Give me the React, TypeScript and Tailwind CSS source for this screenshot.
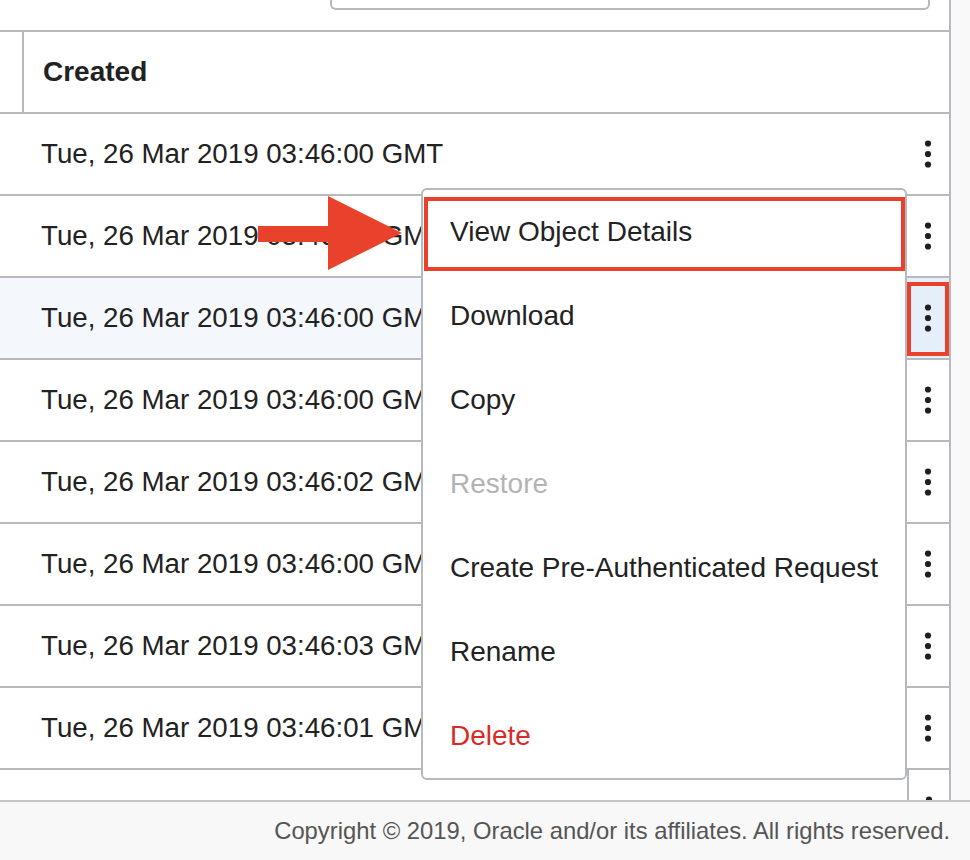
const dates = [
  'Tue, 26 Mar 2019 03:46:00 GMT',
  'Tue, 26 Mar 2019 03:46:01 GMT',
  'Tue, 26 Mar 2019 03:46:00 GMT',
  'Tue, 26 Mar 2019 03:46:00 GMT',
  'Tue, 26 Mar 2019 03:46:02 GMT',
  'Tue, 26 Mar 2019 03:46:00 GMT',
  'Tue, 26 Mar 2019 03:46:03 GMT',
  'Tue, 26 Mar 2019 03:46:01 GMT',
  'Tue, 26 Mar 2019 03:46:00 GMT',
]

const menuItems = [
  { label: 'View Object Details', tone: 'text-[#222]', boxed: true },
  { label: 'Download', tone: 'text-[#222]' },
  { label: 'Copy', tone: 'text-[#222]' },
  { label: 'Restore', tone: 'text-[#b3b3b3]' },
  { label: 'Create Pre-Authenticated Request', tone: 'text-[#222]' },
  { label: 'Rename', tone: 'text-[#222]' },
  { label: 'Delete', tone: 'text-[#d72b26]' },
]

function Kebab() {
  return (
    <svg width="8" height="28" viewBox="0 0 8 28" className="block">
      <circle cx="4" cy="3.5" r="3.1" fill="#1f1f1f" />
      <circle cx="4" cy="14" r="3.1" fill="#1f1f1f" />
      <circle cx="4" cy="24.5" r="3.1" fill="#1f1f1f" />
    </svg>
  )
}

export default function App() {
  return (
    <div className="relative w-[970px] h-[860px] overflow-hidden bg-white font-['Liberation_Sans',Arial,sans-serif] text-[#222]">
      <div className="flex h-[800px] overflow-hidden">
        <div className="w-[951px] shrink-0 border-r-2 border-[#b6b9bd]">
          {/* search box bottom edge */}
          <div className="h-[30px]">
            <div className="ml-[330px] w-[600px] h-[10px] border-x-2 border-b-2 border-[#b6b9bd] rounded-b-[6px]" />
          </div>

          {/* header */}
          <div className="flex h-[84px] border-y-2 border-[#b6b9bd]">
            <div className="w-[24px] border-r-2 border-[#b6b9bd]" />
            <div className="flex items-center pl-[19px] text-[28px] font-bold text-[#222]">Created</div>
          </div>

          {dates.map((d, i) => {
            const active = i === 2
            return (
              <div
                key={i}
                className={`flex h-[82px] shrink-0 border-b-2 border-[#b6b9bd] ${active ? 'bg-[#f4f7fc]' : ''}`}
              >
                <div className="flex-1 flex items-center pl-[41px] text-[27.7px] whitespace-nowrap overflow-hidden">
                  {d}
                </div>
                <div
                  className={`relative w-[42px] flex items-center justify-center ${active ? 'bg-[#e5eff9]' : ''} ${i === 8 ? 'border-l-2 border-[#b6b9bd]' : ''}`}
                >
                  <Kebab />
                  {active && (
                    <div className="absolute left-0 right-0 top-[4px] bottom-[2px] border-4 border-[#e8412c]" />
                  )}
                </div>
              </div>
            )
          })}
        </div>
        <div className="flex-1 bg-[#f9f9f9]" />
      </div>

      <footer className="h-[60px] border-t-2 border-[#c4c6c9] bg-[#f8f8f8] flex items-center justify-end pr-[20px] text-[23.8px] text-[#555]">
        Copyright © 2019, Oracle and/or its affiliates. All rights reserved.
      </footer>

      {/* actions menu */}
      <div className="absolute left-[421px] top-[188px] w-[486px] border-2 border-[#b6b9bd] rounded-[6px] bg-white">
        {menuItems.map((m) => (
          <div key={m.label} className={`relative h-[84px] flex items-center pl-[27px] text-[28px] ${m.tone}`}>
            {m.label}
            {m.boxed && (
              <div className="absolute left-[1px] right-0 top-[7px] h-[74px] border-4 border-[#e8412c]" />
            )}
          </div>
        ))}
      </div>

      {/* pointer arrow */}
      <svg className="absolute left-[256px] top-[194px]" width="150" height="80" viewBox="0 0 150 80">
        <rect x="2" y="32" width="74" height="16" fill="#e8412c" />
        <polygon points="72,2 72,76 146,39" fill="#e8412c" />
      </svg>
    </div>
  )
}
